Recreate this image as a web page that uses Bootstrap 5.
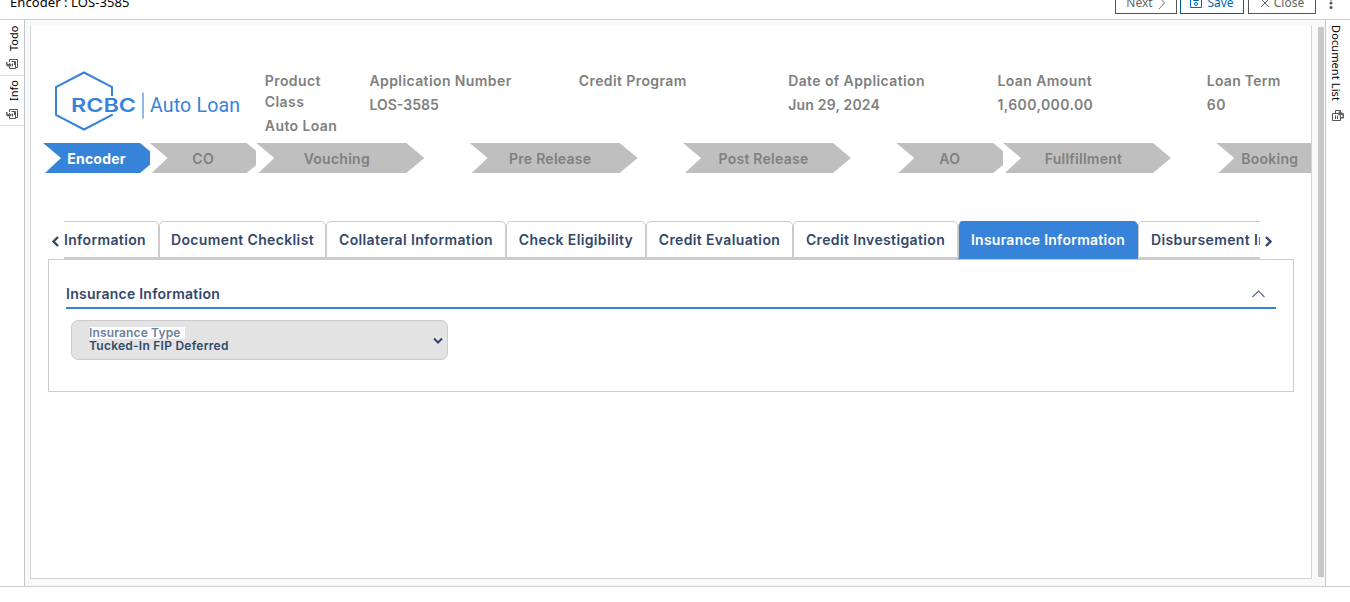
<!DOCTYPE html>
<html lang="en">
<head>
<meta charset="utf-8">
<title>Encoder : LOS-3585</title>
<link href="https://cdn.jsdelivr.net/npm/bootstrap@5.3.0/dist/css/bootstrap.min.css" rel="stylesheet">
<style>
body{font-family:Inter,sans-serif;background:#fff;height:602px;overflow:hidden}
svg{display:block;flex:none}
.topbar{height:20px;border-bottom:1px solid #ccc;font:13px/18px "Noto Sans",sans-serif;color:#000;padding:0 15px 0 10px}
.topbar .title{margin-bottom:8px;letter-spacing:.08px}
.tool{height:26px;border:1px solid #555;border-radius:0;padding:3px 0 0;font:12px/18px "Noto Sans",sans-serif;color:#666;display:flex;align-items:center;justify-content:center;margin-bottom:5px}
.tool.save{border-color:#005ba1;color:#0067b8}
.workspace{height:567px;border-bottom:1px solid #ccc}
.rail{width:25px;flex:none;font:11px/14px "Noto Sans",sans-serif;color:#000}
.rail-left{border-right:1px solid #c6c6c6}.rail-right{border-left:1px solid #c6c6c6}
.rail-tab{border-bottom:1px solid #ddd;width:24px}
.vert{writing-mode:vertical-rl;white-space:nowrap}
.flip{transform:rotate(180deg)}
.stage{background:#f8f9fb;padding:5px 0 7px 5px;min-width:0}
.sheet{width:1282px;border:1px solid #d3d4d6;border-top-color:#f8f9fb;background:#fff;overflow:hidden;flex:none}
.thumb{width:6px;background:#c8c8c8;margin:2px 0 2px 6px}
.facts{width:1256px;margin-left:24px;height:117px;padding-top:44px;font-size:14px;font-weight:600;color:#808080;letter-spacing:.4px}
.facts .col-1,.facts .col-2{padding:0}
.facts .lab,.facts .val{line-height:21px;padding-left:.5px}.facts .val{margin-top:3px}
.steps{width:1280px;margin-left:12px;height:30px}
.step{padding:0;overflow:hidden;height:30px}
.arrow{width:168px;height:30px;background:#bfbfbf;color:#808080;font-size:14px;font-weight:600;letter-spacing:.25px;line-height:32px;text-align:center;padding-right:7px;clip-path:polygon(0 0,150px 0,100% 50%,150px 100%,2px 100%,18px 50%)}
.arrow.short{width:115px;padding-right:8px;clip-path:polygon(0 0,97px 0,100% 50%,97px 100%,2px 100%,18px 50%)}
.arrow.current{background:#3883da;color:#fff;font-weight:700}
.tabs-line{margin:48px 0 0 20px;height:38px}
.tab-window{width:1196px;height:38px;overflow:hidden}
.tabs-line .arr{width:13px;padding-top:3px}
.section-tab{height:38px;flex:none;border:1px solid #ccc;border-bottom-width:2px;border-radius:5px 5px 0 0;color:#32486a;font-size:14px;font-weight:600;letter-spacing:.36px;line-height:35px;text-align:center;white-space:nowrap}
.section-tab.current{background:#3883da;color:#fff;border-color:#3883da;border-left-color:#ccc;letter-spacing:.25px}
.panel{width:1246px;height:133px;margin-left:17px;border:1px solid #ccc;padding:23px 17px 0;color:#32486a}
.panel-title{height:26px;border-bottom:2px solid #3883da;font-size:14px;font-weight:600;letter-spacing:.25px;line-height:20px;padding:0 11px 3px 0}
.picker{width:377px;height:40px;margin:11px 0 0 5px;background:#e3e3e3;border:1px solid #ccc;border-radius:7px;padding:6px 4px 0 17px;font-size:12px;font-weight:600;letter-spacing:.25px;line-height:13px}
.picker .cap{background:#fff;color:#6c809c;width:96px;height:12px;line-height:12px;letter-spacing:.15px}
</style>
</head>
<body>
<header class="topbar d-flex align-items-end overflow-hidden">
  <div class="title me-auto">Encoder : LOS-3585</div>
  <div class="tool" style="width:62px">Next<svg class="ms-1" width="9" height="14" viewBox="0 0 9 14" fill="none" stroke="#777"><path d="M2 1l5.500 6L2 13"/></svg></div>
  <div class="tool save" style="width:64px;margin-left:3px"><svg class="me-1" width="13" height="13" viewBox="0 0 13 13" fill="none" stroke="#0067b8"><path d="M.500.500h11v11H.500zM3.500 1v3.500h5V1"/><circle cx="6" cy="8" r="1.500"/></svg>Save</div>
  <div class="tool" style="width:68px;margin-left:4px"><svg class="me-1" width="10" height="10" viewBox="0 0 10 10" stroke="#666"><path d="M1 1l8 8M9 1L1 9"/></svg>Close</div>
  <svg style="margin:0 2px 10px 13px" width="4" height="12" fill="#555"><circle cx="2" cy="2" r="1.500"/><circle cx="2" cy="6" r="1.500"/><circle cx="2" cy="10.500" r="1.500"/></svg>
</header>
<svg width="0" height="0" class="position-absolute"><defs>
  <g id="docs"><path d="M3.500 3V.500h8v8H10M5.500 2.500h4v7h-6v-2M6.500 4.500v3M8.500 3v3" fill="none" stroke="#555"/><path d="M0 3h1.500v2H3V3.500L6 6 3 8.500V7.500H1.500L0 6z" fill="#666"/></g>
  <g id="docs-flip"><path d="M.500 3.500h8v7h-8zM3.500 3V.500h5v2M3.500 5.500v3.500M5.500 5.500v3.500" fill="none" stroke="#555"/><path d="M7 1l5 2.500v5H9V7h1.500V5H9v1.500L6 4.500z" fill="#666"/></g>
</defs></svg>
<main class="workspace d-flex">
  <aside class="rail rail-left">
    <div class="rail-tab d-flex flex-column align-items-center" style="height:56px;padding-top:5px"><span class="vert flip ms-1" style="height:26px">Todo</span><svg style="margin-top:8px" width="12" height="11"><use href="#docs"/></svg></div>
    <div class="rail-tab d-flex flex-column align-items-center" style="height:50px;padding-top:5px"><span class="vert flip ms-1" style="height:20px">Info</span><svg style="margin-top:8px" width="12" height="11"><use href="#docs"/></svg></div>
  </aside>
  <div class="stage d-flex flex-grow-1">
    <section class="sheet">
      <div class="facts d-flex">
        <div class="col-2"><svg style="margin-top:1px" width="190" height="60" viewBox="0 0 190 60">
          <path d="M57 25V16L29 1.500 1 16v28l28 14.500L57 44v-1" fill="none" stroke="#3883da" stroke-width="2"/>
          <g fill="#3883da" letter-spacing="0"><text x="16" y="41" font-size="19" font-weight="600" textLength="65" lengthAdjust="spacingAndGlyphs">RCBC</text><text x="95" y="41" font-family="Roboto,sans-serif" font-size="19.500" font-weight="400" textLength="90" lengthAdjust="spacing">Auto Loan</text></g>
          <path d="M88 21.500v26" stroke="#8fb9ea" stroke-width="2"/></svg></div>
        <div class="col-1"><div class="lab" style="width:80px">Product<br>Class</div><div class="val">Auto Loan</div></div>
        <div class="col-2"><div class="lab">Application Number</div><div class="val" style="letter-spacing:0">LOS-3585</div></div>
        <div class="col-2"><div class="lab">Credit Program</div></div>
        <div class="col-2"><div class="lab">Date of Application</div><div class="val" style="letter-spacing:.2px">Jun 29, 2024</div></div>
        <div class="col-2"><div class="lab">Loan Amount</div><div class="val">1,600,000.00</div></div>
        <div class="col-1"><div class="lab" style="letter-spacing:.25px">Loan Term</div><div class="val">60</div></div>
      </div>
      <div class="steps d-flex">
        <div class="step col-1"><div class="arrow short current">Encoder</div></div>
        <div class="step col-1"><div class="arrow short">CO</div></div>
        <div class="step col-2"><div class="arrow">Vouching</div></div>
        <div class="step col-2"><div class="arrow">Pre Release</div></div>
        <div class="step col-2"><div class="arrow">Post Release</div></div>
        <div class="step col-1"><div class="arrow short">AO</div></div>
        <div class="step col-2"><div class="arrow">Fullfillment</div></div>
        <div class="step col-1"><div class="arrow short">Booking</div></div>
      </div>
      <div class="tabs-line d-flex align-items-center">
        <div class="arr"><svg width="9" height="11" viewBox="0 0 9 11" fill="none" stroke="#32486a" stroke-width="2.400"><path d="M7 1L2.500 5.500 7 10"/></svg></div>
        <nav class="tab-window d-flex">
          <div class="section-tab" style="width:190px;margin-left:-95px;padding-right:12px;text-align:right">Loan Information</div>
          <div class="section-tab" style="width:167px">Document Checklist</div>
          <div class="section-tab" style="width:180px">Collateral Information</div>
          <div class="section-tab" style="width:140px">Check Eligibility</div>
          <div class="section-tab" style="width:147px">Credit Evaluation</div>
          <div class="section-tab" style="width:165px">Credit Investigation</div>
          <div class="section-tab current" style="width:180px">Insurance Information</div>
          <div class="section-tab" style="width:200px;padding-left:12px;text-align:left">Disbursement Information</div>
        </nav>
        <div class="arr ps-1"><svg width="9" height="11" viewBox="0 0 9 11" fill="none" stroke="#32486a" stroke-width="2.400"><path d="M2 1l4.500 4.500L2 10"/></svg></div>
      </div>
      <div class="panel">
        <div class="panel-title d-flex align-items-center justify-content-between"><span>Insurance Information</span><svg width="13" height="8" viewBox="0 0 13 8" fill="none" stroke="#566b8a" stroke-width="1.200"><path d="M.500 7l6-6 6 6"/></svg></div>
        <div class="picker d-flex justify-content-between">
          <div><div class="cap">Insurance Type</div><div>Tucked-In FIP Deferred</div></div>
          <svg style="margin-top:10px" width="10" height="8" viewBox="0 0 10 8" fill="none" stroke="#32486a" stroke-width="2"><path d="M1 1.500l4 4 4-4"/></svg>
        </div>
      </div>
    </section>
    <div class="thumb"></div>
  </div>
  <aside class="rail rail-right d-flex flex-column align-items-center" style="padding-top:5px"><span class="vert me-1" style="height:77px;letter-spacing:.1px">Document List</span><svg style="margin-top:8px" width="12" height="11"><use href="#docs-flip"/></svg></aside>
</main>
<script src="https://cdn.jsdelivr.net/npm/bootstrap@5.3.0/dist/js/bootstrap.bundle.min.js"></script>
</body>
</html>
